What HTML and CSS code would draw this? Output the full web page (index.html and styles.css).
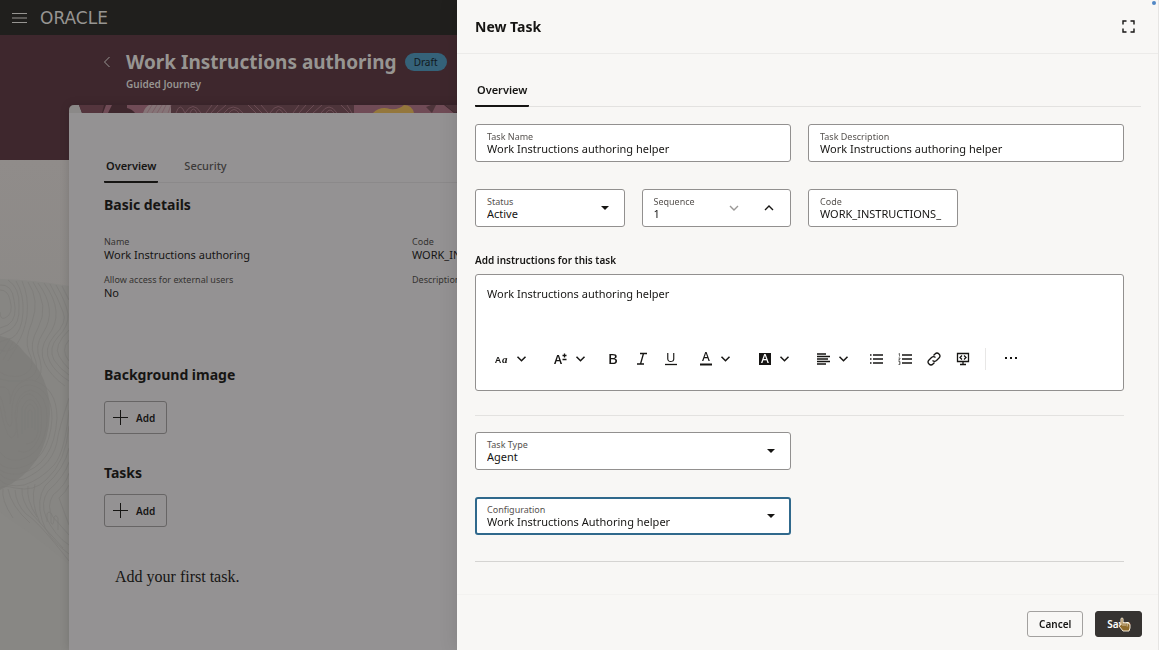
FILE: index.html
```
<!DOCTYPE html>
<html lang="en">
<head>
	<meta charset="UTF-8">
	<title>Work Instructions authoring</title>
	<link rel="stylesheet" href="styles.css">
</head>
<body>
	<div class="page">
		<header class="topbar">
			<button class="menu-btn" aria-label="Menu">
				<svg width="16" height="12" viewBox="0 0 16 12"><path d="M0 1.5h15M0 6h15M0 10.500h15"/></svg>
			</button>
			<span class="logo">ORACLE</span>
		</header>
		<div class="banner">
			<button class="back-btn" aria-label="Back">
				<svg width="8" height="12" viewBox="0 0 8 12"><path d="M6.500 1L1.500 6l5 5"/></svg>
			</button>
			<div class="heading">
				<div class="heading-row">
					<h1>Work Instructions authoring</h1>
					<span class="badge">Draft</span>
				</div>
				<p>Guided Journey</p>
			</div>
		</div>
		<div class="content">
			<!-- contour lines behind the card -->
			<svg class="contours" width="69" height="300" viewBox="0 0 69 300">
				<path class="area" d="M0 1Q35 2 69 8V286Q40 262 20 248Q8 240 0 234z"/>
				<path class="hill" d="M0 58Q14 60 24 74Q50 98 50 135Q48 190 0 212z"/>
				<g class="lines">
					<path d="M0 12Q8 12 10 22Q14 36 5 40Q0 42 0 34"/>
					<path d="M0 7Q12 6 14 22Q18 40 8 47L0 50"/>
					<path d="M8 2Q20 10 19 28Q20 46 10 52L0 57"/>
					<path d="M16 3Q24 16 23 34Q22 54 12 60Q4 62 0 64"/>
					<path d="M22 3Q29 18 27 38Q24 56 17 66Q10 76 0 72"/>
					<path d="M28 4Q40 22 32 44Q24 62 29 74Q38 92 20 98Q8 100 0 94"/>
					<path d="M33 4Q50 28 38 50Q29 66 34 78Q43 99 20 103Q8 104 0 101"/>
					<path d="M38 5Q58 32 43 55Q34 68 40 82Q44 97 35 103"/>
					<path d="M44 5Q66 35 48 58Q38 72 45 86Q51 98 65 108"/>
					<path d="M50 6Q58 20 63 34Q68 44 54 58Q43 71 50 84Q56 95 69 103"/>
					<path d="M56 7Q66 24 68 36Q69 48 58 59Q48 70 54 82Q60 91 69 97"/>
					<path d="M62 8L69 22M69 52Q53 68 59 78Q63 85 69 91M69 62Q60 72 69 83"/>
					<path d="M28 150v-16q2-5 4 0v16M25 152v-20q5-12 10 0v20M22 156v-26q8-17 16 0v24q-3 12-12 12"/>
					<path d="M18 160q-3-18 0-34q12-22 23 4q2 24-3 32q-8 16-20 11"/>
					<path d="M0 128q5 28 11 32q8-2 4-22q1-25 16-26q17 4 16 30q-2 34-28 40q-12 2-19-8"/>
					<path d="M0 118q4 8 6 24q4 12 6 2q-2-38 18-37q22 4 22 34q-3 42-33 49q-12 2-19-4"/>
					<path d="M0 109q12-2 10 17Q13 101 32 102q25 7 25 38q-3 48-38 56q-12 1-19-4"/>
					<path d="M69 120Q60 148 58 158Q55 187 24 201Q8 205 0 196"/>
					<path d="M69 132Q65 174 54 187Q40 202 24 207Q8 210 0 202"/>
					<path d="M69 148Q66 184 46 202Q34 214 15 210Q4 207 0 210"/>
					<path d="M69 170Q65 190 45 208Q36 222 42 242Q47 260 69 276"/>
					<path d="M69 184Q65 198 48 213Q40 225 46 239Q55 258 69 267"/>
					<path d="M69 195Q66 207 53 217Q46 229 53 239L69 257M69 207Q66 214 59 220L69 247"/>
					<path d="M8 211Q11 228 30 245M15 212Q16 226 26 236Q38 243 69 283M22 210Q21 223 32 236L63 270M28 208Q26 222 37 239M35 206Q30 224 40 245M3 211Q1 222 13 240"/>
					<path d="M47 244v-8q2-4 4 0v9q3 4 3-6q2-3 4 1v12"/>
					<path d="M0 76l10-15M3 82l10-18M8 83l10-16"/>
				</g>
			</svg>
			<main class="card">
				<svg class="strip" width="100%" height="8">
					<path fill="#8b8988" d="M0 0h10l3 8H0z"/>
					<path fill="#54353d" d="M10 0h25l-2 8H13z"/>
					<path fill="#704b56" d="M37 0h6l-4 8h-5zM58 0h24l-7 8h-9q-3-4-8-5z"/>
					<path fill="#857477" d="M80 0h22v8H74q2-6 6-8z"/>
					<path fill="#4d343a" d="M102 0h183v8H102z"/>
					<path class="scribble" d="M78 8l5-8M83 8l5-8M88 8l5-8M93 8l4-8M99 8l3-8M107 8q4-12 9 0M116 8q8-13 16 0M121 8q3-8 7 0M137 8l6-8M142 8l7-8M148 8l9-8M155 8q9-12 19 0M160 8q5-7 10 0M179 0l8 8M185 0l8 8M192 0l7 8M201 8q8-13 17 0M207 8q3-7 7 0M224 8l6-8M230 8l7-8M237 8l8-8M244 8l9-8M252 8q8-12 16 0M257 8q4-6 8 0M272 0l8 8M278 0l5 8"/>
					<path fill="#704b56" d="M285 0h90l10 8H285z"/>
					<path fill="#94773c" d="M304 8q7-7 17-4q9 1 14-4q8 0 10 8z"/>
					<path fill="#4d343a" d="M357 2l5-2h5l-4 8zM376 0h20l-10 8z"/>
				</svg>
				<div class="card-body">
					<nav class="tabs">
						<a class="tab active" href="#overview">Overview</a>
						<a class="tab" href="#security">Security</a>
					</nav>
					<h2 id="overview">Basic details</h2>
					<dl class="details">
						<div><dt>Name</dt><dd>Work Instructions authoring</dd></div>
						<div><dt>Code</dt><dd>WORK_IN</dd></div>
						<div class="row-start"><dt>Allow access for external users</dt><dd>No</dd></div>
						<div><dt>Description</dt></div>
					</dl>
					<section class="background-image">
						<h2>Background image</h2>
						<button class="add-btn"><svg width="15" height="15" viewBox="0 0 15 15"><path d="M7.500 0v15M0 7.500h15"/></svg>Add</button>
					</section>
					<section class="tasks">
						<h2>Tasks</h2>
						<button class="add-btn"><svg width="15" height="15" viewBox="0 0 15 15"><path d="M7.500 0v15M0 7.500h15"/></svg>Add</button>
						<p class="empty">Add your first task.</p>
					</section>
				</div>
			</main>
		</div>
	</div>

	<aside class="drawer">
		<span class="dot"></span>
		<header class="drawer-head">
			<h2>New Task</h2>
			<button class="expand-btn" aria-label="Full screen">
				<svg width="13" height="13" viewBox="0 0 13 13"><path d="M1 4.500V1h3.500M8.500 1H12v3.500M12 8.500V12H8.500M4.500 12H1V8.500"/></svg>
			</button>
		</header>
		<form class="drawer-body">
			<nav class="tabs">
				<a class="tab active" href="#task">Overview</a>
			</nav>
			<div class="fields" id="task">
				<div class="field wide">
					<label for="name">Task Name</label>
					<input id="name" type="text" value="Work Instructions authoring helper">
				</div>
				<div class="field wide">
					<label for="desc">Task Description</label>
					<input id="desc" type="text" value="Work Instructions authoring helper">
				</div>
				<div class="field select">
					<label for="status">Status</label>
					<select id="status"><option>Active</option></select>
				</div>
				<div class="field stepper">
					<label for="seq">Sequence</label>
					<input id="seq" type="text" value="1">
					<div class="steps">
						<button type="button" disabled aria-label="Decrease"><svg width="10" height="6" viewBox="0 0 10 6"><path d="M1 1l4 4 4-4"/></svg></button>
						<button type="button" aria-label="Increase"><svg width="10" height="6" viewBox="0 0 10 6"><path d="M1 5l4-4 4 4"/></svg></button>
					</div>
				</div>
				<div class="field">
					<label for="code">Code</label>
					<input id="code" type="text" value="WORK_INSTRUCTIONS_">
				</div>
			</div>

			<label class="editor-label" for="instructions">Add instructions for this task</label>
			<div class="editor">
				<textarea id="instructions">Work Instructions authoring helper</textarea>
				<div class="toolbar">
					<button type="button" class="drop" aria-label="Font">
						<svg width="14" height="14" viewBox="0 0 14 14"><text x="0" y="11" class="tiny">A</text><text x="7" y="11" class="tiny script">a</text></svg>
						<svg class="chev" width="9" height="6" viewBox="0 0 9 6"><path d="M.5.800l4 4 4-4"/></svg>
					</button>
					<button type="button" class="drop after" aria-label="Font size">
						<svg width="14" height="14" viewBox="0 0 14 14"><text x="0" y="12" class="mid">A</text><path d="M8.500 3.500h4M10.500 1.500v4M8.500 7.500h4"/></svg>
						<svg class="chev" width="9" height="6" viewBox="0 0 9 6"><path d="M.5.800l4 4 4-4"/></svg>
					</button>
					<button type="button" class="after" aria-label="Bold"><svg width="14" height="14" viewBox="0 0 14 14"><text x="2" y="12" class="big">B</text></svg></button>
					<button type="button" aria-label="Italic"><svg width="14" height="14" viewBox="0 0 14 14"><path d="M5 1.500h7M2 12h7M8.500 1.500L5.500 12"/></svg></button>
					<button type="button" aria-label="Underline"><svg width="14" height="14" viewBox="0 0 14 14"><text x="2" y="10" class="under">U</text><path d="M1 12.500h12"/></svg></button>
					<button type="button" class="drop after" aria-label="Text colour">
						<svg width="14" height="14" viewBox="0 0 14 14"><text x="3" y="9" class="color">A</text><path class="bar" d="M1 12.500h12"/></svg>
						<svg class="chev" width="9" height="6" viewBox="0 0 9 6"><path d="M.5.800l4 4 4-4"/></svg>
					</button>
					<button type="button" class="drop after" aria-label="Highlight">
						<svg width="14" height="14" viewBox="0 0 14 14"><path class="box" d="M1 1h12v12H1z"/><text x="3" y="11" class="color inverse">A</text></svg>
						<svg class="chev" width="9" height="6" viewBox="0 0 9 6"><path d="M.5.800l4 4 4-4"/></svg>
					</button>
					<button type="button" class="drop after" aria-label="Align">
						<svg width="14" height="14" viewBox="0 0 14 14"><path d="M0 2h9M0 4.500h13M0 7h11M0 9.500h13M0 12h9"/></svg>
						<svg class="chev" width="9" height="6" viewBox="0 0 9 6"><path d="M.5.800l4 4 4-4"/></svg>
					</button>
					<button type="button" class="after" aria-label="Bulleted list"><svg width="14" height="14" viewBox="0 0 14 14"><path d="M4 3h10M4 7h10M4 11h10M1 3h1.500M1 7h1.500M1 11h1.500"/></svg></button>
					<button type="button" aria-label="Numbered list"><svg width="14" height="14" viewBox="0 0 14 14"><path d="M4 3h10M4 7h10M4 11h10"/><path class="thin" d="M.5 2l1-.5v3M.5 6h1.500v1l-1.500 1h1.500M.5 9.500h1.500v3H.5M1 11h1"/></svg></button>
					<button type="button" aria-label="Link"><svg width="14" height="14" viewBox="0 0 14 14"><path d="M5.500 8.500a3 3 0 0 0 4 0l2.500-2.500a2.800 2.800 0 0 0-4-4L6.500 3.500M8.500 5.500a3 3 0 0 0-4 0L2 8a2.800 2.800 0 0 0 4 4l1.500-1.500"/></svg></button>
					<button type="button" aria-label="Embed"><svg width="14" height="14" viewBox="0 0 14 14"><path d="M1.500 1.500h11v8h-11zM7 9.500v3M4 12.500h6"/><path d="M6 3.500l-2 2 2 2M8 3.500l2 2-2 2"/></svg></button>
					<span class="sep"></span>
					<button type="button" class="more" aria-label="More"><svg width="14" height="14" viewBox="0 0 14 14"><path class="box" d="M1 5h2v2H1zM6 5h2v2H6zM11 5h2v2h-2z"/></svg></button>
				</div>
			</div>

			<div class="fields agent">
				<div class="field select wide">
					<label for="type">Task Type</label>
					<select id="type"><option>Agent</option></select>
				</div>
				<div class="field select wide focused">
					<label for="config">Configuration</label>
					<select id="config"><option>Work Instructions Authoring helper</option></select>
				</div>
			</div>
		</form>
		<footer class="drawer-foot">
			<button class="btn">Cancel</button>
			<button class="btn primary">Save
				<svg class="pointer" width="13" height="15" viewBox="0 0 13 15"><path d="M3 8V2q0-1 1-1t1 1v4q1-1 2 0q1-.8 2 .2q1-.5 1.500.500q1.500-.3 1.500 1.300v3l-1 3H5L1 9q0-1.500 2-1z"/><path class="fingers" d="M5 6v3M7 6v3M9.200 6.500v3"/></svg>
			</button>
		</footer>
	</aside>
</body>
</html>
```

FILE: styles.css
```
*{
	box-sizing: border-box;
}
body{
	margin: 0;
	font-family: "Noto Sans", "Open Sans", sans-serif;
	font-size: 11px;
	line-height: 14px;
	color: #161513;
	overflow: hidden;
}
h1,h2,p,dl,dd{
	margin: 0;
}
h2{
	font-size: 14px;
	line-height: 20px;
}
button{
	font: inherit;
	color: inherit;
	padding: 0;
	border: 0;
	background: none;
	display: flex;
	align-items: center;
	cursor: pointer;
}
svg{
	display: block;
	flex: none;
	fill: none;
	stroke: currentColor;
}

/* page behind the drawer */
.page{
	min-height: 100vh;
	display: flex;
	flex-direction: column;
	background: linear-gradient(#908c8a 160px, #888784 450px);
}
.topbar{
	height: 35px;
	padding: 0 12px;
	display: flex;
	align-items: center;
	gap: 12px;
	background: #201f1d;
	color: #979592;
}
.logo{
	font-family: "DejaVu Sans", sans-serif;
	font-size: 17px;
	line-height: 20px;
}
.banner{
	height: 125px;
	padding: 15px 103px 0;
	display: flex;
	align-items: flex-start;
	gap: 15px;
	background: #3e272d;
	color: #979592;
}
.back-btn{
	height: 24px;
}
.heading-row{
	display: flex;
	align-items: center;
	gap: 8px;
}
h1{
	font-size: 19px;
	line-height: 24px;
}
.heading p{
	margin-top: 3px;
	font-size: 10px;
	font-weight: 600;
}
.badge{
	padding: 0 9px;
	border-radius: 9px;
	background: #356279;
	color: #11191d;
	font-size: 10px;
	line-height: 18px;
}
.content{
	flex: 1;
	display: flex;
}
.contours{
	margin-top: 118px;
	stroke: #7c7b78;
}
.contours .area{
	fill: #878683;
	stroke: none;
}
.contours .hill{
	fill: #7f7e7b;
	stroke: none;
}
.contours .lines{
	stroke-width: .7;
}
.card{
	flex: 1;
	margin: -55px 69px 0 0;
	background: #949293;
	border-radius: 5px 5px 0 0;
	overflow: hidden;
	box-shadow: 0 0 10px rgba(0,0,0,.15);
}
.strip{
	background: #3e272d;
	stroke: none;
}
.scribble{
	stroke: #795860;
	stroke-width: .7;
}
.card-body{
	padding: 45px 62px 60px 35px;
}
.tabs{
	display: flex;
	gap: 24px;
	line-height: 16px;
	border-bottom: 1px solid #8b898a;
}
.tab{
	padding: 0 2px 7px;
	margin-bottom: -1px;
	color: #3c3a39;
	font-weight: 500;
	text-decoration: none;
	border-bottom: 2px solid transparent;
}
.tab.active{
	color: #161513;
	font-weight: 600;
	border-color: #161513;
	border-radius: 1px;
}
.card-body > h2{
	margin-top: 12px;
}
.details{
	margin-top: 21px;
	display: grid;
	grid-template-columns: repeat(3, 1fr);
	row-gap: 12px;
}
.details .row-start{
	grid-column: 1;
}
dt{
	font-size: 9px;
	line-height: 12px;
	color: #343231;
}
.background-image{
	margin-top: 65px;
}
.background-image h2{
	margin-bottom: 16px;
}
.tasks{
	margin-top: 29px;
}
.tasks h2{
	margin-bottom: 11px;
}
.add-btn{
	height: 33px;
	padding: 0 11px 0 8px;
	gap: 8px;
	border: 1px solid #676565;
	border-radius: 3px;
	font-size: 10px;
	font-weight: 600;
}
.empty{
	margin: 40px 11px 0;
	font-family: "Liberation Serif", serif;
	font-size: 16px;
	line-height: 20px;
}

/* new task drawer */
.drawer{
	position: fixed;
	top: 0;
	bottom: 0;
	left: 457px;
	right: 0;
	display: flex;
	flex-direction: column;
	background: #f8f7f5;
	border-right: 1px solid #e6e5e3;
	box-shadow: 0 0 18px rgba(0,0,0,.12);
}
.dot{
	position: absolute;
	top: 1px;
	right: 2px;
	width: 4px;
	height: 4px;
	border-radius: 50%;
	background: #5187c5;
}
.drawer-head{
	height: 54px;
	padding: 0 23px 0 18px;
	display: flex;
	align-items: center;
	justify-content: space-between;
	border-bottom: 1px solid #ecebe9;
}
.expand-btn svg{
	stroke-width: 1.4;
}
.drawer-body{
	flex: 1;
	padding: 28px 34px 0 18px;
}
.drawer-body .tabs{
	margin-right: -17px;
	border-color: #e3e2e0;
}
.fields{
	display: grid;
	grid-template-columns: repeat(4, 1fr);
	gap: 27px 17px;
	margin-top: 17px;
}
.field{
	position: relative;
	height: 38px;
	padding: 6px 11px 0;
	background: #fff;
	border: 1px solid #92908f;
	border-radius: 3px;
}
.field.wide{
	grid-column: span 2;
}
.field label{
	display: block;
	font-size: 9px;
	line-height: 12px;
	color: #56524f;
}
.field input,
.field select{
	display: block;
	width: 100%;
	height: 16px;
	margin: -2px 0 0;
	padding: 0;
	border: 0;
	outline: 0;
	background: none;
	appearance: none;
	font: inherit;
	line-height: 16px;
	color: #161513;
}
.field.focused{
	border: 2px solid #30698c;
	padding: 5px 10px 0;
}
/* drop-down arrow */
.select::after{
	content: "";
	position: absolute;
	top: 50%;
	right: 15px;
	margin-top: -2px;
	border: 4px solid transparent;
	border-top-color: #161513;
	border-bottom: 0;
	pointer-events: none;
}
.focused::after{
	right: 14px;
}
.steps{
	position: absolute;
	top: 0;
	bottom: 0;
	right: 16px;
	display: flex;
	gap: 25px;
}
.steps svg{
	stroke-width: 1.4;
}
.steps button:disabled{
	color: #9a9896;
}
.editor-label{
	display: block;
	margin: 26px 0 7px;
	font-size: 10px;
	font-weight: 600;
}
.editor{
	height: 117px;
	padding: 12px 11px 0;
	background: #fff;
	border: 1px solid #92908f;
	border-radius: 3px;
}
.editor textarea{
	display: block;
	width: 100%;
	height: 60px;
	padding: 0;
	border: 0;
	outline: 0;
	resize: none;
	font: inherit;
	color: #161513;
}
.toolbar{
	display: flex;
	align-items: center;
	height: 24px;
	padding-left: 8px;
	gap: 15px;
}
.toolbar .drop{
	gap: 8px;
}
.toolbar .after{
	margin-left: 6px;
}
.toolbar .drop + .drop{
	margin-left: 13px;
}
.toolbar svg{
	stroke-width: 1.3;
	overflow: visible;
}
.toolbar .chev{
	stroke-width: 1.5;
}
.toolbar text{
	fill: #161513;
	stroke: none;
	font-size: 12px;
}
.toolbar .tiny{
	font-size: 9px;
	font-weight: 600;
}
.toolbar .script{
	font-family: "Liberation Serif", serif;
	font-size: 11px;
	font-style: italic;
}
.toolbar .mid{
	font-weight: 600;
}
.toolbar .big{
	font-size: 15px;
	font-weight: 500;
}
.toolbar .under{
	font-size: 13px;
}
.toolbar .color{
	font-size: 12px;
	font-weight: 500;
}
.toolbar .inverse{
	fill: #fff;
}
.toolbar .bar{
	stroke-width: 2;
}
.toolbar .thin{
	stroke-width: .6;
}
.toolbar .box{
	fill: #161513;
	stroke: none;
}
.sep{
	width: 1px;
	height: 22px;
	background: #e8e7e6;
}
.toolbar .more{
	margin-left: 3px;
}
.agent{
	margin-top: 24px;
	padding: 16px 0 26px;
	border-top: 1px solid #e3e2e0;
	border-bottom: 1px solid #d5d4d2;
}
.agent .field{
	grid-column: 1 / span 2;
}
.drawer-foot{
	padding: 16px 16px 13px;
	display: flex;
	justify-content: flex-end;
	gap: 12px;
	border-top: 1px solid #f3f2f0;
}
.btn{
	position: relative;
	height: 26px;
	padding: 0 11px;
	border: 1px solid #a3a19f;
	border-radius: 3px;
	font-size: 10px;
	font-weight: 600;
}
.btn.primary{
	background: #363331;
	border-color: #363331;
	color: #fff;
}
.pointer{
	position: absolute;
	top: 5px;
	right: 10px;
	fill: #8f6b2b;
	stroke: #f4ead8;
}
.pointer .fingers{
	stroke-width: .7;
}
```
